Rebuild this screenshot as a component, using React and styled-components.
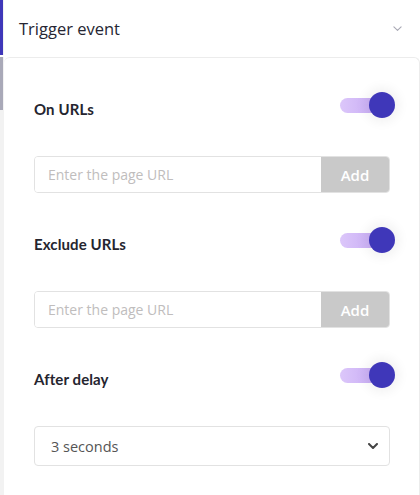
import React from 'react'
import styled, { createGlobalStyle } from 'styled-components'

const GlobalStyle = createGlobalStyle`
  html, body {
    margin: 0;
    padding: 0;
    background: #ffffff;
  }
  body {
    font-family: Lato, "Noto Sans", sans-serif;
  }
`;

const Page = styled.div`
  display: flex;
  width: 420px;
  height: 495px;
  overflow: hidden;
  background: #fff;
`;

const Rail = styled.div`
  width: 4px;
  flex: none;
  display: flex;
  flex-direction: column;
  background: #f2f2f2;
`;

const RailMark = styled.div`
  width: 3px;
  height: ${p => p.h}px;
  background: ${p => p.color};
  flex: none;
`;

const RailGap = styled.div`
  height: 2px;
  background: #fff;
  flex: none;
`;

const Main = styled.div`
  flex: 1;
  display: flex;
  flex-direction: column;
`;

const Header = styled.div`
  height: 57px;
  flex: none;
  display: flex;
  align-items: center;
  justify-content: space-between;
  padding: 0 18px 0 15px;
`;

const Title = styled.h3`
  margin: 0;
  font-family: "Open Sans", "Noto Sans", sans-serif;
  font-size: 16.5px;
  font-weight: 400;
  color: #262633;
`;

const Card = styled.section`
  flex: 1;
  border-top: 1px solid #ececec;
  border-right: 1px solid #ececec;
  border-radius: 6px 6px 0 0;
  padding: 34px 29px 0 30px;
  display: flex;
  flex-direction: column;
`;

const Row = styled.div`
  height: 26px;
  flex: none;
  display: flex;
  align-items: center;
  justify-content: space-between;
  margin-bottom: 38px;
`;

const Label = styled.span`
  font-family: Lato, "Noto Sans", sans-serif;
  font-size: 15px;
  font-weight: 700;
  color: #25252f;
  padding-top: 8px;
  letter-spacing: 0.1px;
`;

const Toggle = styled.div`
  position: relative;
  width: 50px;
  height: 26px;
`;

const Track = styled.div`
  position: absolute;
  left: 0;
  top: 6px;
  width: 40px;
  height: 15px;
  border-radius: 8px;
  background: linear-gradient(90deg, #dcc7fa, #c6a9f4);
`;

const Knob = styled.div`
  position: absolute;
  right: -5px;
  top: 0;
  width: 26px;
  height: 26px;
  border-radius: 50%;
  background: #3f37b9;
  box-shadow: 0 0 12px 4px rgba(0, 0, 0, 0.06);
`;

const Field = styled.div`
  display: flex;
  flex: none;
  height: 37px;
  border: 1px solid #e2e2e2;
  border-radius: 4px;
  overflow: hidden;
  margin-bottom: 34px;
  box-sizing: border-box;
`;

const Input = styled.input`
  flex: 1;
  min-width: 0;
  border: none;
  outline: none;
  padding: 0 13px;
  font-family: "Open Sans", "Noto Sans", sans-serif;
  font-size: 14px;
  color: #333;
  &::placeholder {
    color: #c0bdbd;
  }
`;

const AddButton = styled.button`
  width: 68px;
  border: none;
  background: #c9c9c9;
  color: #fff;
  font-family: "Open Sans", "Noto Sans", sans-serif;
  font-size: 15px;
  font-weight: 600;
  padding: 0;
`;

const Select = styled.div`
  height: 40px;
  flex: none;
  border: 1px solid #e2e2e2;
  border-radius: 4px;
  box-sizing: border-box;
  display: flex;
  align-items: center;
  justify-content: space-between;
  padding: 0 11px 0 16px;
  font-family: "Open Sans", "Noto Sans", sans-serif;
  font-size: 14.5px;
  color: #555;
`;

const Chevron = ({ size = 10, color, width = 2 }) => (
  <svg width={size} height={size * 0.6} viewBox="0 0 10 6" fill="none">
    <path d="M1 1l4 4 4-4" stroke={color} strokeWidth={width} strokeLinecap="round" strokeLinejoin="round" />
  </svg>
);

const Switch = () => (
  <Toggle>
    <Track />
    <Knob />
  </Toggle>
);

const UrlField = () => (
  <Field>
    <Input placeholder="Enter the page URL" />
    <AddButton>Add</AddButton>
  </Field>
);

export default function App() {
  return (
    <>
      <GlobalStyle />
      <Page>
        <Rail>
          <RailMark h={55} color="#3f37b9" />
          <RailGap />
          <RailMark h={53} color="#a9a9b8" />
        </Rail>
        <Main>
          <Header>
            <Title>Trigger event</Title>
            <Chevron size={9} color="#a8a8b4" width={1.2} />
          </Header>
          <Card>
            <Row>
              <Label>On URLs</Label>
              <Switch />
            </Row>
            <UrlField />
            <Row>
              <Label>Exclude URLs</Label>
              <Switch />
            </Row>
            <UrlField />
            <Row>
              <Label>After delay</Label>
              <Switch />
            </Row>
            <Select>
              <span>3 seconds</span>
              <Chevron size={10} color="#444" width={2} />
            </Select>
          </Card>
        </Main>
      </Page>
    </>
  )
}
